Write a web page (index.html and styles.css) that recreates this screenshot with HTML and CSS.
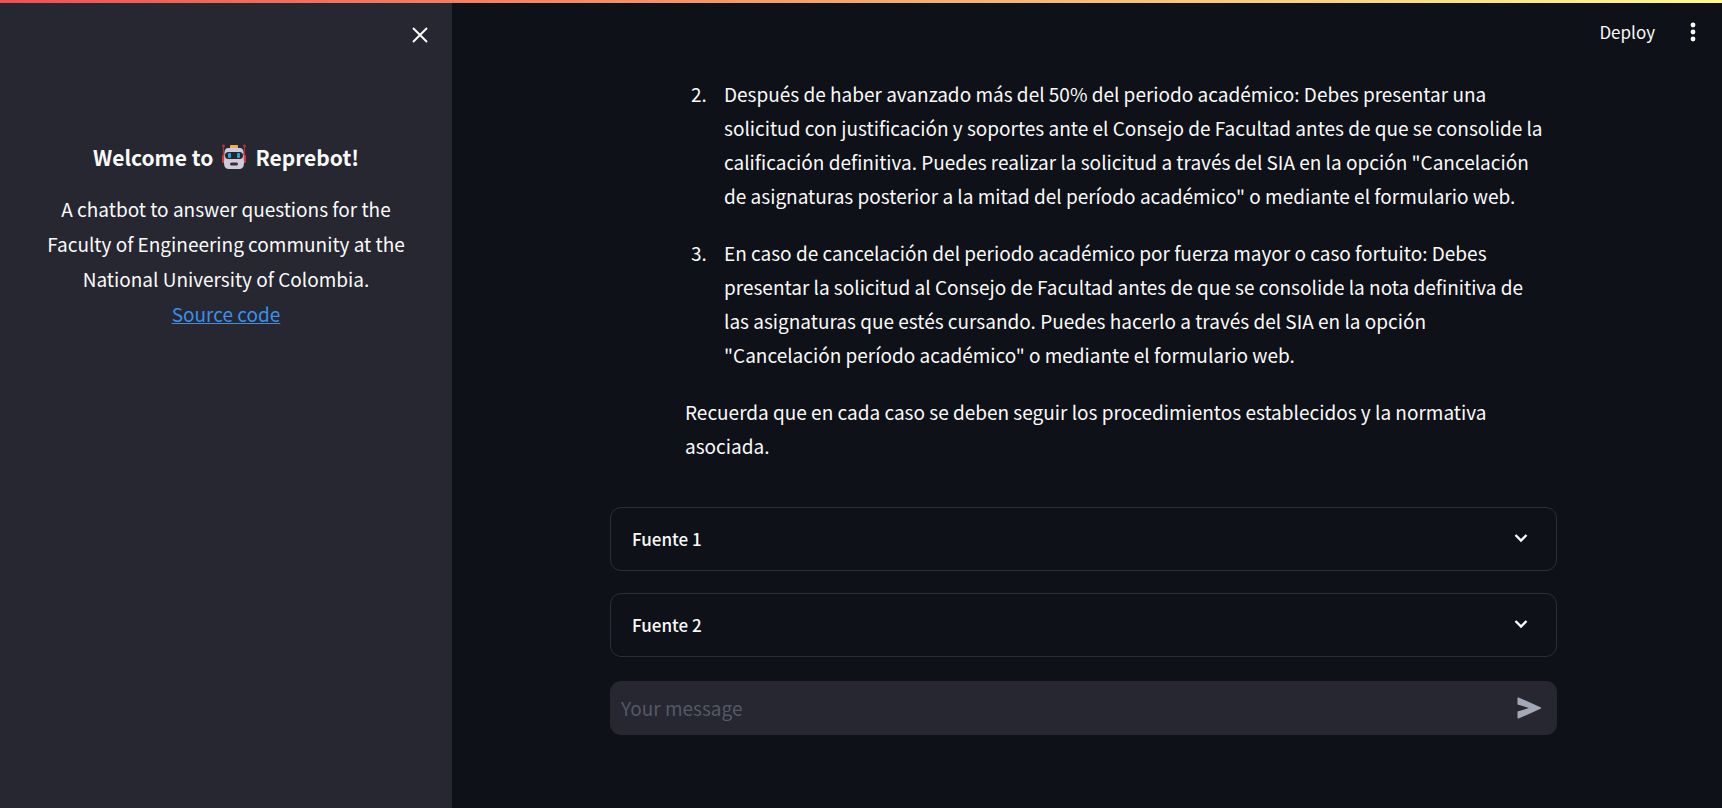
FILE: index.html
```html
<!DOCTYPE html>
<html lang="es">
<head>
<meta charset="utf-8">
<title>Reprebot</title>
<link rel="stylesheet" href="styles.css">
</head>
<body>
<div class="decoration"></div>
<div class="app">
  <aside class="sidebar" lang="en">
    <button class="icon-button close" type="button" aria-label="Close sidebar">
      <svg width="32" height="32" viewBox="0 0 32 32"><path d="M9 9l14 14M23 9L9 23" fill="none" stroke="currentColor" stroke-width="2"/></svg>
    </button>
    <div class="intro">
      <h1 class="intro-title">Welcome to
        <svg class="robot" width="26" height="26" viewBox="0 0 26 26" role="img" aria-label="robot">
          <path d="M2.500 2v17M23.500 2v17" stroke="#b5323a" stroke-width="1.200"/>
          <circle cx="2.500" cy="2" r="1.400" fill="#b5323a"/><circle cx="23.500" cy="2" r="1.400" fill="#b5323a"/>
          <rect x="1" y="11" width="3" height="8" rx="1" fill="#d2373f"/><rect x="22" y="11" width="3" height="8" rx="1" fill="#d2373f"/>
          <rect x="9" y="1" width="8" height="5" rx="1" fill="#eeb04d"/>
          <path d="M7 4h12q3 0 3.500 4l.5 11q0 6-5 6H8q-5 0-5-6L3.500 8Q4 4 7 4z" fill="#d3c9dc"/>
          <rect x="4" y="8" width="18" height="7" rx="3.500" fill="#26262f"/>
          <rect x="7" y="9" width="3" height="5" rx="1" fill="#21a7d0"/><rect x="16" y="9" width="3" height="5" rx="1" fill="#21a7d0"/>
          <rect x="9" y="18.500" width="8" height="3" rx="1.500" fill="#34313c"/>
        </svg>
        Reprebot!</h1>
      <p class="intro-text">A chatbot to answer questions for the Faculty of Engineering community at the National University of Colombia.<br><a class="link" href="#">Source code</a></p>
    </div>
  </aside>
  <main class="main">
    <header class="toolbar">
      <button class="deploy" type="button">Deploy</button>
      <button class="icon-button" type="button" aria-label="Menu">
        <svg width="32" height="32" viewBox="0 0 32 32" fill="currentColor"><circle cx="16" cy="9" r="2.400"/><circle cx="16" cy="16" r="2.400"/><circle cx="16" cy="23" r="2.400"/></svg>
      </button>
    </header>
    <div class="content">
      <article class="message">
        <ol class="steps" start="2">
          <li>Después de haber avanzado más del 50% del periodo académico: Debes presentar una solicitud con justificación y soportes ante el Consejo de Facultad antes de que se consolide la calificación definitiva. Puedes realizar la solicitud a través del SIA en la opción "Cancelación de asignaturas posterior a la mitad del período académico" o mediante el formulario web.</li>
          <li>En caso de cancelación del periodo académico por fuerza mayor o caso fortuito: Debes presentar la solicitud al Consejo de Facultad antes de que se consolide la nota definitiva de las asignaturas que estés cursando. Puedes hacerlo a través del SIA en la opción "Cancelación período académico" o mediante el formulario web.</li>
        </ol>
        <p class="closing">Recuerda que en cada caso se deben seguir los procedimientos establecidos y la normativa asociada.</p>
      </article>
      <div class="sources">
        <button class="source" type="button" aria-expanded="false">Fuente 1
          <svg width="16" height="16" viewBox="0 0 16 16"><path d="M2.500 4L8 9.500 13.500 4" fill="none" stroke="currentColor" stroke-width="2.400"/></svg>
        </button>
        <button class="source" type="button" aria-expanded="false">Fuente 2
          <svg width="16" height="16" viewBox="0 0 16 16"><path d="M2.500 4L8 9.500 13.500 4" fill="none" stroke="currentColor" stroke-width="2.400"/></svg>
        </button>
      </div>
      <form class="chat">
        <input class="chat-input" type="text" placeholder="Your message" aria-label="Your message">
        <button class="send" type="button" aria-label="Send">
          <svg width="26" height="26" viewBox="0 0 26 26"><path d="M2.500 2.400Q1.500 2.200 1.500 3.500V9.500L13 13 1.500 16.500V22.500Q1.500 23.800 2.500 23.600L25 13.600V12.400z" fill="currentColor"/></svg>
        </button>
      </form>
    </div>
  </main>
</div>
</body>
</html>
```
FILE: styles.css
```css
* { box-sizing: border-box; }

body {
  margin: 0;
  background: #0e1117;
  color: #fafafa;
  font-family: "Noto Sans CJK SC", "Noto Sans", sans-serif;
  font-size: 19px;
  line-height: 34px;
}

button, input {
  border: 0;
  padding: 0;
  background: none;
  color: inherit;
  font: inherit;
}

svg { display: block; }

.decoration {
  position: fixed;
  inset: 0 0 auto;
  height: 3px;
  background: linear-gradient(90deg, #ff4b4b, #fffd80);
  z-index: 1;
}

.app {
  display: grid;
  grid-template-columns: 452px 1fr;
  min-height: 100vh;
}

.sidebar {
  display: flex;
  flex-direction: column;
  padding: 19px 16px;
  background: #262730;
}

.icon-button {
  width: 32px;
  height: 32px;
}

.close { align-self: flex-end; }

.intro {
  padding: 89px 24px 0;
  text-align: center;
}

.intro-title {
  display: flex;
  justify-content: center;
  align-items: center;
  gap: 8px;
  margin: 0 0 17px;
  font-size: 21px;
  line-height: 34px;
  font-weight: 700;
}

.intro-text {
  margin: 0;
  line-height: 35px;
}

.link { color: #3d8fe8; }

.main {
  display: flex;
  flex-direction: column;
  padding-right: 7px;
}

.toolbar {
  display: flex;
  justify-content: flex-end;
  align-items: center;
  gap: 22px;
  padding: 15px 6px 0 0;
}

.deploy { font-size: 17px; }

.content {
  width: 100%;
  max-width: 947px;
  margin: 0 auto;
  padding-top: 28px;
}

.message { padding: 0 12px 0 75px; }

.steps {
  margin: 0;
  padding-left: 26px;
}

.steps li {
  margin-bottom: 23px;
  padding-left: 13px;
}

.closing { margin: 0; }

.sources {
  display: grid;
  gap: 22px;
  margin: 44px 0 24px;
}

.source {
  display: flex;
  justify-content: space-between;
  align-items: center;
  height: 64px;
  padding: 0 27px 0 21px;
  border: 1px solid #2c2e36;
  border-radius: 11px;
  font-size: 17px;
  font-weight: 500;
}

.chat {
  display: flex;
  align-items: center;
  height: 54px;
  padding: 0 15px 0 11px;
  border-radius: 11px;
  background: #262730;
}

.chat-input {
  flex: 1;
  min-width: 0;
  outline: 0;
}

.chat-input::placeholder {
  color: #555866;
  opacity: 1;
}

.send { color: #a3a8b8; }
```
